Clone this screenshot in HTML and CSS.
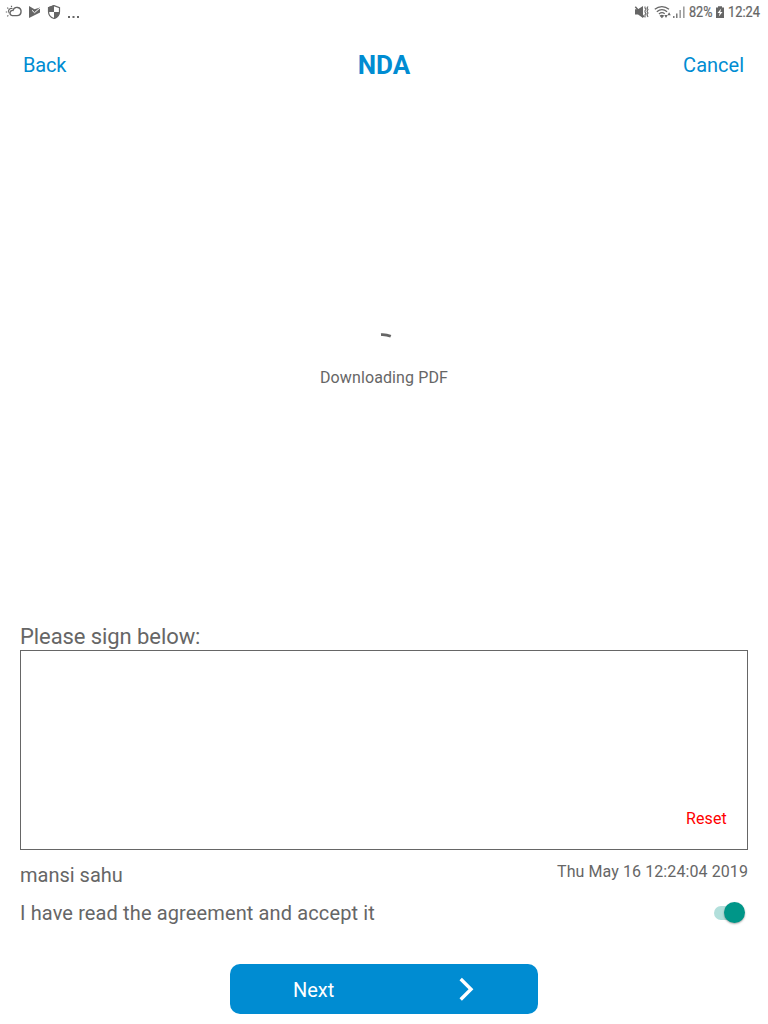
FILE: index.html
```html
<!DOCTYPE html>
<html lang="en">
<head>
<meta charset="utf-8">
<title>NDA</title>
<link rel="stylesheet" href="styles.css">
</head>
<body>
<div class="screen">
  <div class="status">
    <svg width="84" height="24" viewBox="0 0 84 24" fill="none" stroke="#666">
      <path d="M12.300 15.600H17a4.100 4.100 0 1 0-4-5.200 2.600 2.600 0 0 0-.7 5.200z" stroke-width="1.400"/>
      <path d="M12.500 8.600a2.900 2.900 0 0 0-3.300 4.600M5.800 12h1.400M7.300 7.700l1 1M11.500 5.700v1.300M7.300 16.300l1-1" stroke-width="1.200"/>
      <path d="M29 6l5.500 3.300L40 7.500v5L29 18z" fill="#666" stroke="none"/>
      <path d="M32 10.300l2.500 2.400 6-5.200" stroke="#fff" stroke-width="1"/>
      <path d="M54 5.600l5.500 2v3.900c0 3.200-2.200 6-5.500 7-3.300-1-5.500-3.800-5.500-7V7.600z" fill="#fff" stroke-width="1.200"/>
      <path d="M54 5v7h-5.800V7.200zM54 12h5.800c-.3 3.300-2.400 6-5.800 7z" fill="#666" stroke="none"/>
      <path d="M68 16h2v2h-2zM72.500 16h2v2h-2zM77 16h2v2h-2z" fill="#666" stroke="none"/>
    </svg>
    <svg width="138" height="24" viewBox="630 0 138 24" fill="none" stroke="#666">
      <path d="M635 9.300h3L643 6v12l-5-3.500h-3z" fill="#666" stroke="none"/>
      <path d="M635.300 6.800l8.700 10.200" stroke-width="1.500"/>
      <path d="M645 6.500v1.500l1 1.200-1 1.400v1.500l1 1.300-1 1.400v2.700M648 6.500l-1 1.500 1 1.600-1 1.700 1 1.700-1 1.700 1 2.300" stroke-width="1.100"/>
      <path d="M654.800 9.300c4.200-3.700 10-3.700 14.200 0M656.800 11.700c3.100-2.600 7.200-2.600 10.300 0M658.900 14c1.900-1.500 4.200-1.500 5.800-.2M660.500 15.800l1.400 1.600 1.400-1.600q-1.400-1-2.800 0z" stroke-width="1.200"/>
      <path d="M664.300 15h3.400l-1.700 3zM667.400 15.200h3.400l-1.700-3z" fill="#666" stroke="none"/>
      <path d="M673.800 16v2M676.800 13.500V18" stroke-width="1.300"/>
      <path d="M679.500 10h1.300v8h-1.300zM683.200 6.500h1.300V18h-1.300z" stroke="none" fill="#888"/>
      <text class="status-text" x="689" y="17" textLength="23.500" lengthAdjust="spacingAndGlyphs">82%</text>
      <path d="M718 6.200h4v1.300h2V18h-8V7.500h2z" fill="#666" stroke="none"/>
      <path d="M721.200 8.500l-3.700 4.400h2.200l-.9 3.700 3.700-4.700h-2.200z" fill="#fff" stroke="none"/>
      <text class="status-text" x="728" y="17" textLength="32" lengthAdjust="spacingAndGlyphs">12:24</text>
    </svg>
  </div>
  <header class="header">
    <a class="nav nav-start">Back</a>
    <h1 class="title">NDA</h1>
    <a class="nav nav-end">Cancel</a>
  </header>
  <main class="pdf">
    <svg width="40" height="40" viewBox="0 0 40 40" fill="none"><path d="M17 14.600Q22 14.200 26.800 16.200" stroke="#666" stroke-width="2.800"/></svg>
    <div class="loading">Downloading PDF</div>
  </main>
  <section class="form">
    <div class="label">Please sign below:</div>
    <div class="pad"><span class="reset">Reset</span></div>
    <div class="signer"><span class="name">mansi sahu</span><span class="date">Thu May 16 12:24:04 2019</span></div>
    <div class="agree"><span class="terms">I have read the agreement and accept it</span><span class="switch"><span class="thumb"></span></span></div>
  </section>
  <button class="next"><span>Next</span>
    <svg width="18" height="26" viewBox="0 0 18 26" fill="none" stroke="#fff" stroke-width="3.400"><path d="M3.700 2L14 12.200 3.700 22.500"/></svg>
  </button>
</div>
</body>
</html>
```

FILE: styles.css
```css
* { box-sizing: border-box; }
body { margin: 0; background: #fff; color: #666; font-family: Roboto, sans-serif; }
.screen { width: 768px; height: 1024px; display: flex; flex-direction: column; overflow: hidden; }
.status { height: 24px; display: flex; justify-content: space-between; }
.status-text { font-size: 14px; fill: #666; stroke: #666; stroke-width: .2px; }
.header { height: 82px; padding: 0 24px 0 23px; display: grid; grid-template-columns: 1fr auto 1fr; align-items: center; color: #008cd2; }
.nav { font-size: 20px; line-height: 24px; }
.nav-start { letter-spacing: -.2px; }
.nav-end { text-align: right; }
.title { margin: 0; padding-left: 1px; font-size: 26px; line-height: 30px; font-weight: 700; }
.pdf { height: 518px; padding-top: 214px; display: flex; flex-direction: column; align-items: center; }
.loading { margin-top: 8px; font-size: 16px; line-height: 19px; letter-spacing: .12px; }
.form { padding: 0 20px; }
.label { height: 26px; font-size: 22px; line-height: 26px; letter-spacing: -.08px; }
.pad { height: 200px; border: 1px solid #666; display: flex; justify-content: flex-end; align-items: flex-end; padding: 0 20px 21px; }
.reset { color: #f00; font-size: 16px; line-height: 19px; letter-spacing: .15px; }
.signer { height: 43px; padding-top: 12px; display: flex; justify-content: space-between; }
.name { font-size: 20px; line-height: 26px; }
.date { font-size: 16px; line-height: 19px; letter-spacing: .09px; }
.agree { height: 40px; display: flex; justify-content: space-between; align-items: center; font-size: 20px; }
.terms { letter-spacing: .125px; }
.switch { width: 28px; height: 14px; margin: 0 6px 1px 0; border-radius: 7px; background: #b2dfdb; display: flex; align-items: center; justify-content: flex-end; }
.thumb { width: 21px; height: 21px; margin-right: -3px; flex: none; border-radius: 50%; background: #009688; box-shadow: 0 1px 2px rgba(0,0,0,.35); }
.next { width: 308px; height: 50px; margin: 31px 0 0 230px; padding: 2px 63px 0; display: flex; align-items: center; justify-content: space-between; border: 0; border-radius: 10px; background: #008cd2; color: #fff; font: 20px Roboto, sans-serif; }
```
